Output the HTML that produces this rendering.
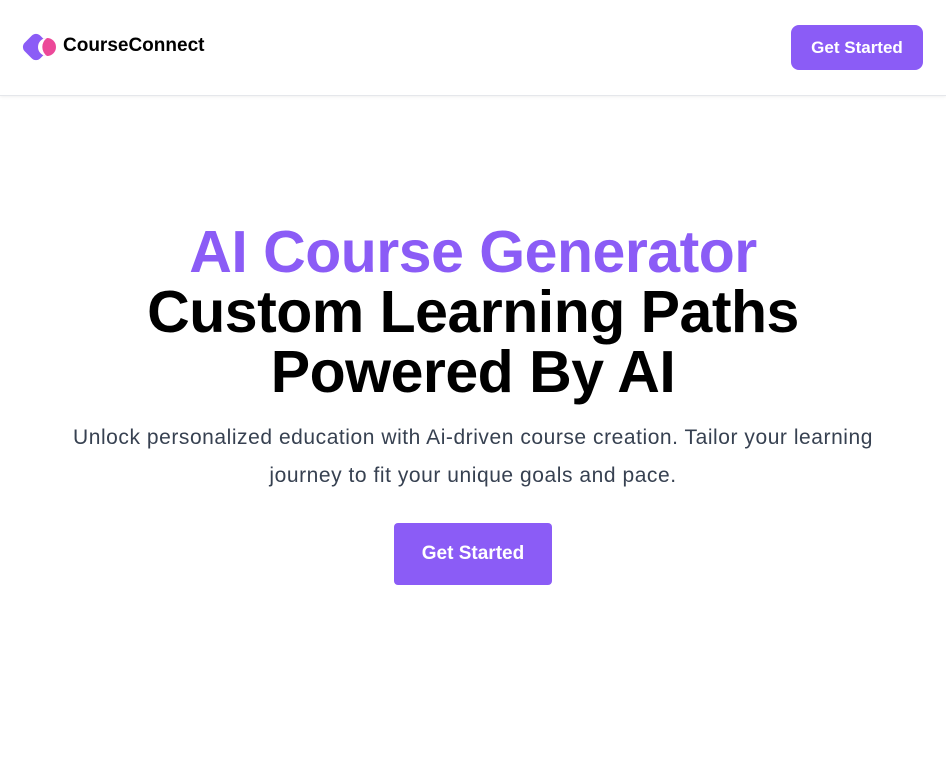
<!DOCTYPE html>
<html><head><style>
body{margin:0;width:946px;height:780px;background:#fff;font-family:"Liberation Sans",sans-serif;overflow:hidden}
.nav{height:95px;border-bottom:1px solid #e5e7eb;box-shadow:0 1px 3px rgba(0,0,0,.06);position:relative}
.logo{position:absolute;left:20px;top:29px}
.brand{position:absolute;left:63px;top:35px;font-weight:bold;font-size:19px;color:#000}
.nbtn{position:absolute;left:791px;top:25px;width:132px;height:45px;background:#8b5cf6;color:#fff;border-radius:8px;font-weight:bold;font-size:17px;display:flex;align-items:center;justify-content:center}
h1{margin:0;text-align:center;font-size:59px;line-height:60px;font-weight:900;letter-spacing:-0.5px;position:absolute;top:222px;left:0;width:946px}
.p{color:#8b5cf6}
.desc{position:absolute;top:419px;left:0;width:946px;text-align:center;font-size:21px;letter-spacing:0.55px;line-height:38px;color:#374151}
.btn{position:absolute;left:394px;top:523px;width:158px;height:62px;background:#8b5cf6;color:#fff;border-radius:4px;font-weight:bold;font-size:19px;display:flex;align-items:center;justify-content:center}
</style></head><body>
<div class="nav">
<svg class="logo" width="40" height="36" viewBox="0 0 40 36"><rect x="5" y="7" width="22" height="22" rx="6" transform="rotate(45 16 18)" fill="#8b5cf6"/><circle cx="27" cy="18" r="9" fill="#ec4899"/><path d="M27 9a9 9 0 0 0 0 18a11 11 0 0 1 0-18z" fill="#fff"/></svg>
<div class="brand">CourseConnect</div>
<div class="nbtn">Get Started</div>
</div>
<h1><span class="p">AI Course Generator</span><br>Custom Learning Paths<br>Powered By AI</h1>
<div class="desc">Unlock personalized education with Ai-driven course creation. Tailor your learning<br>journey to fit your unique goals and pace.</div>
<div class="btn">Get Started</div>
</body></html>
